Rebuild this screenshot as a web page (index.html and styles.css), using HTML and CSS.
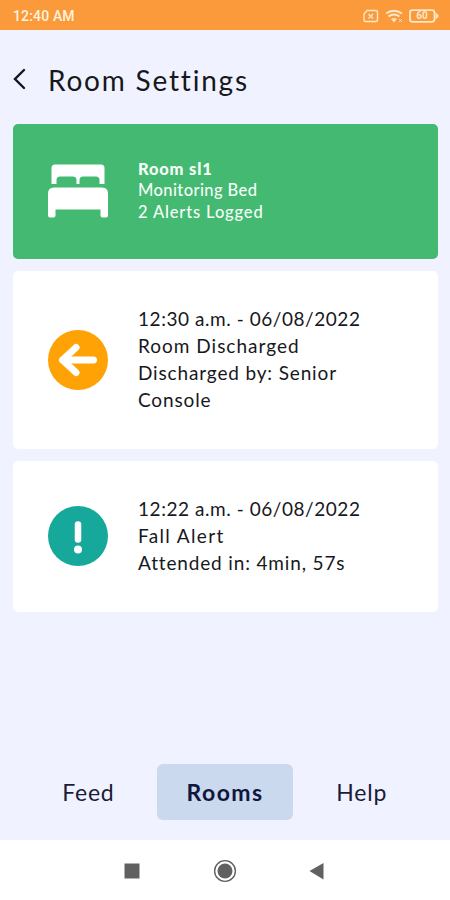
FILE: index.html
```html
<!doctype html>
<html lang="en">
<head>
 <meta charset="UTF-8">
 <meta name="viewport" content="width=device-width, initial-scale=1.0">
 <title>Room Settings</title>
 <link rel="stylesheet" href="styles.css">
</head>
<body>
<div class="wrapper">
 <div class="status">
  <span class="clock">12:40 AM</span>
  <svg class="status-icons" width="78" height="16" viewBox="0 0 78 16">
   <g fill="none" stroke="#fee6c8" stroke-width="1.4">
    <path d="M6 2.500h9q1.500 0 1.500 1.500v8q0 1.500-1.500 1.500h-10.500q-1.500 0-1.500-1.500v-6z"/>
    <path d="M7.500 6l4.500 4.500M12 6l-4.500 4.500"/>
    <path d="M25 5.500q8-5.500 16 0M27.500 8.500q5.500-4 11 0" stroke-width="2"/>
    <path d="M38 11l3 3M41 11l-3 3" stroke-width=".8"/>
    <rect x="49" y="2.200" width="24.500" height="11.600" rx="2.500" stroke-width="1.800"/>
   </g>
   <path d="M30 11q3-2 6 0l-3 3.500zM74.500 4.500l3 2.500v2l-3 2.500z" fill="#fee6c8"/>
   <text class="charge" x="61" y="11.300" text-anchor="middle">60</text>
  </svg>
 </div>
 <div class="title">
  <svg class="back" width="14" height="24" viewBox="0 0 14 24">
   <path d="M12 3L3 12l9 9" fill="none" stroke="#14161c" stroke-width="2.400" stroke-linecap="round"/>
  </svg>
  <h1>Room Settings</h1>
 </div>
 <ul class="list">
  <li class="card room">
   <svg class="icon" width="60" height="60" viewBox="0 0 60 60">
    <path d="M7 2.500h46q3.500 0 3.500 3.500v16h-5v-4q0-3.500-3.500-3.500h-13q-3.500 0-3.500 3.500v4h-3v-4q0-3.500-3.500-3.500h-13q-3.500 0-3.500 3.500v4h-5v-16q0-3.500 3.500-3.500z" fill="#fff"/>
    <path d="M6 25.500h48q6 0 6 6v22q0 2-2 2h-3.500q-2 0-2-2v-6h-45v6q0 2-2 2h-3.500q-2 0-2-2v-22q0-6 6-6z" fill="#fff"/>
   </svg>
   <div class="text"><b>Room sl1</b><p class="bed">Monitoring Bed</p><p class="logged">2 Alerts Logged</p></div>
  </li>
  <li class="card discharge">
   <svg class="icon" width="60" height="60" viewBox="0 0 60 60">
    <circle cx="30" cy="30" r="30" fill="#ffa205"/>
    <path d="M45.500 30h-31M28 17.500L14.500 30l13.500 12.500" fill="none" stroke="#fff" stroke-width="7" stroke-linecap="round" stroke-linejoin="round"/>
   </svg>
   <div class="text"><p>12:30 a.m. - 06/08/2022</p><p class="event">Room Discharged</p><p class="by">Discharged by: Senior<br>Console</p></div>
  </li>
  <li class="card fall">
   <svg class="icon" width="60" height="60" viewBox="0 0 60 60">
    <circle cx="30" cy="30" r="30" fill="#16a99b"/>
    <path d="M30 18.500v15" stroke="#fff" stroke-width="6.500" stroke-linecap="round"/>
    <circle cx="30" cy="43.500" r="4" fill="#fff"/>
   </svg>
   <div class="text"><p>12:22 a.m. - 06/08/2022</p><p class="alert">Fall Alert</p><p class="by">Attended in: 4min, 57s</p></div>
  </li>
 </ul>
 <div class="tabs">
  <a href="#">Feed</a>
  <a class="active" href="#">Rooms</a>
  <a href="#">Help</a>
 </div>
 <div class="keys">
  <svg width="24" height="24" viewBox="0 0 24 24"><path d="M4.500 4.500h15v15h-15z" fill="#616161"/></svg>
  <svg width="24" height="24" viewBox="0 0 24 24">
   <circle cx="12" cy="12" r="10.400" fill="none" stroke="#616161" stroke-width="1.400"/>
   <circle cx="12" cy="12" r="7.500" fill="#616161"/>
  </svg>
  <svg width="24" height="24" viewBox="0 0 24 24"><path d="M17.500 4v16.500L3.500 12z" fill="#616161"/></svg>
 </div>
</div>
</body>
</html>
```
FILE: styles.css
```css
*{
 margin:0;
 padding:0;
 box-sizing: border-box;
}
html,body{
 height:100%;
 overflow: hidden;
}
body{
 font-family: Lato, "Noto Sans", sans-serif;
 color: #17181c;
}
.wrapper{
 display: flex;
 flex-direction: column;
 height:900px;
 width:450px;
 background-color: #f0f3ff;
}
.status{
 display: flex;
 align-items: center;
 justify-content: space-between;
 height:30px;
 padding:2px 11px 0 13px;
 background-color: #fb9a3b;
}
.clock{
 font: 500 14px/16px Roboto, sans-serif;
 letter-spacing: .15px;
 color: #fff3df;
}
.charge{
 font: 700 10px Roboto, sans-serif;
 fill: #fee6c8;
}
.title{
 display: flex;
 align-items: center;
 height:94px;
 padding:4px 0 0 12px;
}
.title h1{
 margin-left: 22px;
 padding-top: 1px;
 font-size: 28px;
 font-weight: 400;
 line-height: 36px;
 letter-spacing: 1.800px;
}
.list{
 display: flex;
 flex-direction: column;
 gap: 12px;
 padding:0 12px 0 13px;
 list-style: none;
}
.card{
 display: flex;
 align-items: center;
 padding:0 35px;
 border-radius: 5px;
 background-color: #fff;
}
.icon{
 flex: none;
 margin-right: 30px;
}
.text{
 padding-bottom: 3px;
 font-size: 19px;
 line-height: 27px;
 letter-spacing: .55px;
 white-space: nowrap;
}
.room{
 height:135px;
 background-color: #43b972;
 color: #f5fff7;
}
.room .text{
 padding-bottom: 1px;
 font-size: 16.500px;
 font-weight: 500;
 line-height: 21.500px;
}
.room b{
 display: block;
 font-weight: 900;
 letter-spacing: .8px;
}
.room .bed{
 letter-spacing: .4px;
}
.room .logged{
 letter-spacing: .85px;
}
.discharge{
 height:178px;
}
.event{
 letter-spacing: 1px;
}
.by{
 letter-spacing: .85px;
}
.alert{
 letter-spacing: 1.350px;
}
.fall{
 height:151px;
}
.fall .icon{
 margin-top: -1px;
}
.tabs{
 display: flex;
 height:56px;
 margin-top: 152px;
 padding:0 20px;
}
.tabs a{
 flex: 1;
 border-radius: 6px;
 font-size: 23px;
 line-height: 56px;
 letter-spacing: .8px;
 color: #1a1c38;
 text-align: center;
 text-decoration: none;
}
.tabs .active{
 background-color: #cad9ee;
 font-weight: 700;
 letter-spacing: 1.400px;
 color: #10163d;
}
.keys{
 display: flex;
 justify-content: center;
 align-items: center;
 gap: 69px;
 height:60px;
 margin-top: auto;
 padding-top: 2px;
 background-color: #fff;
}
```
